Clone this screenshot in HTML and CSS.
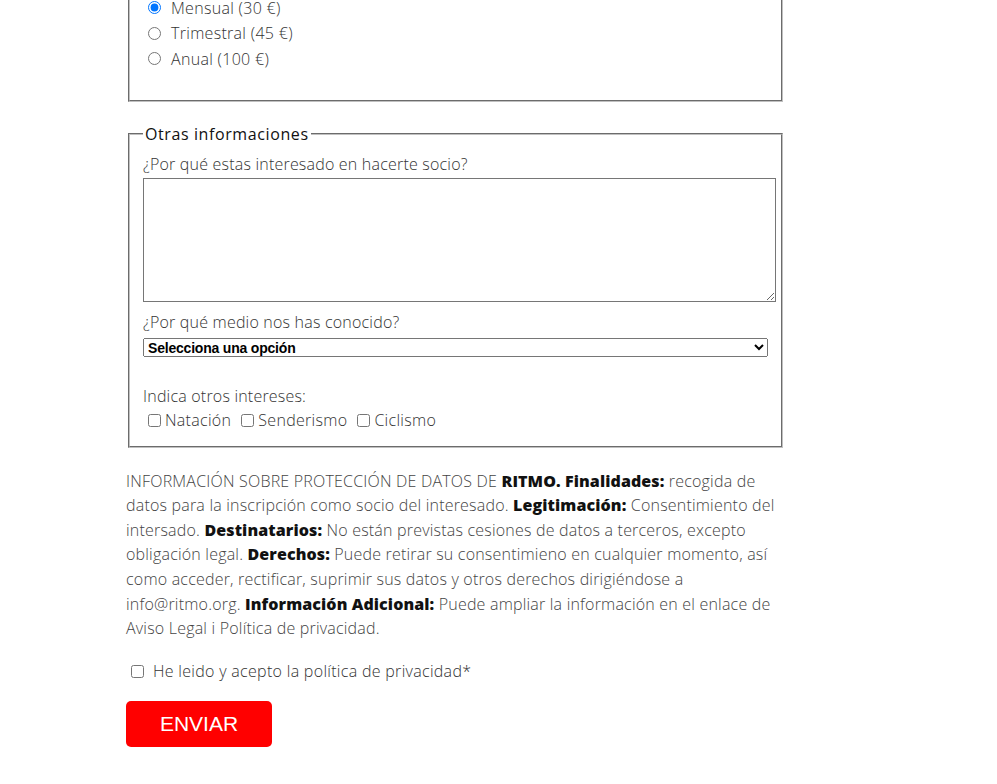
FILE: index.html
```html
<!DOCTYPE html>
<html lang="es">
<head>
  <meta charset="UTF-8" />
  <title>Hazte socio - Ritmo</title>
  <link rel="stylesheet" href="styles.css">
</head>
<body>

  <form class="form-socio" action="#" method="post">

    <fieldset class="cuota">
      <label class="option"><input type="radio" name="cuota" value="mensual" checked> Mensual (30 €)</label>
      <label class="option"><input type="radio" name="cuota" value="trimestral"> Trimestral (45 €)</label>
      <label class="option"><input type="radio" name="cuota" value="anual"> Anual (100 €)</label>
    </fieldset>

    <fieldset class="otras">
      <legend>Otras informaciones</legend>

      <label class="field-label" for="motivo">¿Por qué estas interesado en hacerte socio?</label>
      <textarea id="motivo" name="motivo"></textarea>

      <label class="field-label medio" for="medio">¿Por qué medio nos has conocido?</label>
      <select id="medio" name="medio">
        <option value="">Selecciona una opción</option>
        <option value="amigos">Amigos</option>
        <option value="redes">Redes sociales</option>
        <option value="web">Internet</option>
      </select>

      <p class="field-label intereses">Indica otros intereses:</p>
      <div class="checks">
        <label><input type="checkbox" name="intereses" value="natacion">Natación</label>
        <label><input type="checkbox" name="intereses" value="senderismo">Senderismo</label>
        <label><input type="checkbox" name="intereses" value="ciclismo">Ciclismo</label>
      </div>
    </fieldset>

    <p class="proteccion">
      INFORMACIÓN SOBRE PROTECCIÓN DE DATOS DE <strong>RITMO. Finalidades:</strong> recogida de datos para la inscripción como socio del interesado. <strong>Legitimación:</strong> Consentimiento del intersado. <strong>Destinatarios:</strong> No están previstas cesiones de datos a terceros, excepto obligación legal. <strong>Derechos:</strong> Puede retirar su consentimieno en cualquier momento, así como acceder, rectificar, suprimir sus datos y otros derechos dirigiéndose a info@ritmo.org. <strong>Información Adicional:</strong> Puede ampliar la información en el enlace de Aviso Legal i Política de privacidad.
    </p>

    <label class="acepto"><input type="checkbox" name="acepto" required> He leido y acepto la política de privacidad*</label>

    <button type="submit" class="btn-enviar">ENVIAR</button>
  </form>

</body>
</html>
```

FILE: styles.css
```css
* {
  box-sizing: border-box;
}

body {
  margin: 0;
  font-family: 'Open Sans', sans-serif;
  font-weight: 300;
  font-size: 16px;
  letter-spacing: 0.2px;
  color: #333;
  background: #fff;
}

.form-socio {
  width: 659px;
  margin-left: 126px;
  padding-bottom: 40px;
}

fieldset {
  margin: 0 2px;
  padding: 0 13px;
  border: 2px groove #c0c0c0;
}

/* Tipo de cuota */
.cuota {
  margin-top: -13px;
  padding-top: 6px;
  padding-bottom: 28px;
}

.option {
  display: flex;
  align-items: center;
  height: 25.5px;
  letter-spacing: 0.3px;
  color: #333;
}

.option input {
  margin: 0 10px 0 5px;
}

/* Otras informaciones */
.otras {
  margin-top: 21px;
  padding-bottom: 13px;
}

.otras legend {
  padding: 0 2px;
  font-weight: 400;
  letter-spacing: 0.6px;
  color: #111;
  line-height: 22px;
}

.field-label {
  display: block;
  margin: 7px 0 2px;
  line-height: 24px;
}

.otras textarea {
  display: block;
  width: calc(100% + 8px);
  height: 124px;
  padding: 3px;
  margin: 0;
  border: 1px solid #767676;
  resize: vertical;
}

.field-label.medio {
  margin-top: 8px;
  margin-bottom: 4px;
}

.otras select {
  display: block;
  width: 100%;
  height: 19px;
  margin: 0;
  font-family: 'Liberation Sans', Arial, sans-serif;
  font-size: 14px;
  font-weight: 700;
  letter-spacing: -0.2px;
  color: #000;
}

.field-label.intereses {
  margin: 27px 0 0;
}

.checks {
  display: flex;
  gap: 5px;
  height: 25px;
  align-items: center;
  letter-spacing: 0.3px;
}

.checks label {
  display: flex;
  align-items: center;
}

.checks input {
  margin: 0 4px 0 5px;
}

/* Texto legal */
.proteccion {
  margin: 21px 0 18px;
  line-height: 1.54;
  color: #444;
}

.proteccion strong {
  font-weight: 800;
  letter-spacing: 0.1px;
  color: #111;
}

.acepto {
  display: flex;
  align-items: center;
  height: 25px;
  letter-spacing: 0.3px;
  color: #333;
}

.acepto input {
  margin: 0 9px 0 5px;
}

.btn-enviar {
  display: block;
  margin-top: 17px;
  width: 146px;
  height: 46px;
  background: #ff0000;
  color: #fff;
  border: none;
  border-radius: 5px;
  font-family: 'Liberation Sans', Arial, sans-serif;
  font-size: 21px;
  letter-spacing: 0;
  cursor: pointer;
}
```
